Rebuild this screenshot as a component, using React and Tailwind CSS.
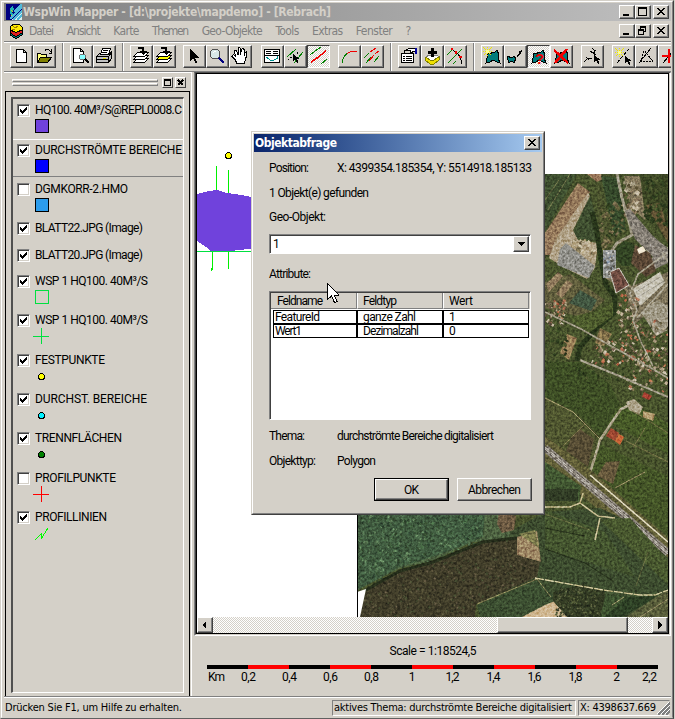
import React, { useLayoutEffect, useRef } from "react";

/* A line of text spread to a given pixel width, as bitmap fonts were. */
function T({ w, className = "", children }) {
  const ref = useRef(null);
  useLayoutEffect(() => {
    const el = ref.current;
    el.style.letterSpacing = "0px";
    const natural = el.getBoundingClientRect().width;
    const n = String(children).length;
    if (w && n > 1) {
      const gap = (w - natural) / (n - 1);
      el.style.letterSpacing = `${gap}px`;
      el.style.marginRight = `${-gap}px`;
    }
  }, [w, children]);
  return (
    <span ref={ref} className={`inline-block whitespace-pre ${className}`}>
      {children}
    </span>
  );
}

const SANS = "font-['Roboto','Liberation_Sans',sans-serif] text-[12px] leading-4";
const TAHOMA = "font-['DejaVu_Sans_Condensed','DejaVu_Sans',sans-serif] text-[11px] leading-4";
const RAISED = "bg-[#d4d0c8] border border-t-white border-l-white border-r-[#404040] border-b-[#404040]";
const DITHER = "bg-[repeating-conic-gradient(#ffffff_0_25%,#d4d0c8_0_50%)] bg-[length:2px_2px]";

const K = "#000";
const G = "#008000";
const R = "#f00000";
const TEAL = "#007c7c";

const Spark = ({ x = 3, y = 3 }) => (
  <g fill="#f0e800">
    {[[0, 0], [1, 1], [2, 2], [6, 2], [7, 1], [8, 0], [2, 6], [1, 7], [6, 6], [7, 7], [4, 0], [4, 2], [0, 4], [2, 4], [6, 4], [8, 4], [4, 6], [4, 8], [3, 3], [5, 3], [3, 5], [5, 5]].map(([a, b]) => (
      <rect key={`${a}-${b}`} x={x + a} y={y + b} width="1" height="1" />
    ))}
    <rect x={x + 3} y={y + 3} width="3" height="3" fill="#ffff90" />
  </g>
);
const Pointer = ({ x, y }) => (
  <path d={`M${x} ${y}v7l2-2 2 4h1.5l-1.5-4h2.5z`} fill={K} />
);
const Blob = () => (
  <path d="M6 8l3 1 3-2 2 0 2-2 2 5-1 3 2 5-3-1-4-2-3 2-4 1 1-5z" fill={TEAL} stroke={K} strokeWidth="1" />
);

const ICONS = {
  new: <path d="M6.500 4.500h7l3 3v10h-10zM13.500 4.500v3h3" fill="#fff" stroke={K} />,
  open: (
    <g>
      <path d="M4.500 17.500v-9h3l1 1h5v3" fill="#ffff80" stroke={K} />
      <path d="M4.500 17.500l3-5h11l-4 5z" fill="#808000" stroke={K} />
      <path d="M12 5.500q3-3 5.500 1.500M18.500 4v4h-3" fill="none" stroke={K} />
    </g>
  ),
  preview: (
    <g>
      <path d="M3.500 3.500h7l3 3v11h-10zM10.500 3.500v3h3" fill="#fff" stroke={K} />
      <circle cx="12.500" cy="12" r="3" fill="#8ff" stroke="#707070" />
      <path d="M15 14l4 4" stroke={K} strokeWidth="2" />
    </g>
  ),
  print: (
    <g>
      <path d="M3.500 11.500l3-3h10l2-2v7l-3 4h-12z" fill="#c0c0c0" stroke={K} />
      <path d="M7.500 9.500l2-6h8l-2 6z" fill="#fff" stroke={K} />
      <path d="M3.500 11.500h12l3-4M3.500 14.500h12M10 5.500h5M9 7.500h5M15.500 12v5" stroke={K} fill="none" />
      <path d="M10 13h3" stroke="#e0e000" />
    </g>
  ),
  layers: (c) => (
    <g>
      {[15, 12, 9].map((y, i) => (
        <path key={y} d={`M3.500 ${y + 2.500}l4-4h11l-4 4z`} fill={i === 1 ? c : "#fff"} stroke={K} />
      ))}
      <path d="M8 3h6M13 3v4" stroke={K} strokeWidth="2" />
      <path d="M9 6h8l-4 4z" fill={K} />
    </g>
  ),
  arrow: <path d="M7 4v12l3-3 2.500 5h2l-2.500-5.500h4z" fill={K} />,
  zoom: (
    <g>
      <circle cx="9" cy="9" r="5" fill="#d8e8e8" stroke="#505050" />
      <path d="M7 8q1-2 3-2" stroke="#fff" fill="none" />
      <path d="M13 13l5 5" stroke="#000080" strokeWidth="2.500" />
    </g>
  ),
  hand: (
    <path
      d="M8 18.500l-2-4-3-3q0-2 2-1.500l2 2-2-6q1-2 2.500 0l1.500 3.500v-6q1.500-2 2.500 0v6l1-5q1.500-1.500 2.500 0v6l1-3q2-1.500 2 1l-1.500 6-1 4z"
      fill="#fff"
      stroke={K}
    />
  ),
  panel: (
    <g>
      <path d="M3.500 4.500h15v13h-15z" fill="#fff" stroke={K} />
      <path d="M5 6.500h5M12 6.500h5M5 8.500h5M12 8.500h5M3 10.500h16" stroke={K} />
      <path d="M5 12l5 3.500h2l4-2 1-2" stroke="#009090" fill="none" />
    </g>
  ),
  pickline: (
    <g>
      <path d="M3 12l9-8M10 18l9-11" stroke={G} />
      <path d="M4 15l4-3M13 9l2-3" stroke={K} strokeDasharray="2 1" />
      <Pointer x={9} y={9} />
    </g>
  ),
  lines: (
    <g>
      <path d="M3 10l5-4M8 6l6-4M14 19l6-5" stroke={G} />
      <path d="M4 17l6-4M10 13l9-7" stroke={R} strokeWidth="1.500" />
    </g>
  ),
  curve: (
    <g fill="none">
      <path d="M4.500 18v-3q1-4 5-7" stroke={G} />
      <path d="M9 8.500l4-2M13 6.500h6" stroke={R} />
    </g>
  ),
  multi: (
    <g>
      <path d="M3 13l5-5M5 18l5-6M13 17l5-6" stroke={G} />
      <path d="M9 7l6-4M8 16l5-6M14 9l4-3" stroke={R} />
    </g>
  ),
  props: (
    <g>
      <path d="M3.500 8.500h12v9h-12z" fill="#fff" stroke={K} />
      <path d="M5 11.500h2M8 11.500h6M5 13.500h2M8 13.500h6M5 15.500h2M8 15.500h6" stroke={K} />
      <path d="M6 8V5h6v3l5-2V4l-5-1-4 2" fill="#fff" stroke={K} />
      <path d="M17 3h2v6h-2z" fill="#0000a0" />
    </g>
  ),
  addlayer: (
    <g>
      <path d="M4 13l4-3h8l3 3-6 5h-3z" fill="#fff" stroke="#808080" />
      <path d="M4 12l7 4 7-4v3l-5 4h-4l-5-4z" fill="#f0e000" stroke="#808000" />
      <path d="M11.500 3v9M7 7.500h9" stroke={K} strokeWidth="3" />
    </g>
  ),
  cross: (
    <g fill="none">
      <path d="M3 10l6-6M4 18L18 4M9 19l3-3" stroke={G} />
      <path d="M7 4l5 3q5 4 6 12" stroke={K} />
      <path d="M7 3h2v2H7zM11 6h2v3h-2zM15 11h3v2h-3z" fill={R} />
    </g>
  ),
  newshape: <g><Blob /><Spark x={2} y={2} /></g>,
  moveshape: (
    <g>
      <path d="M3.500 11.500l4 1 3-1 1 2-1 4-3-1-3 1z" fill={TEAL} stroke={K} />
      <path d="M12 11l3-3-1-1 4-2-1 5-1-1-3 3z" fill={K} />
    </g>
  ),
  query: (
    <g>
      <Blob />
      <text x="8" y="19" fill={R} className="font-['Liberation_Sans',sans-serif] text-[15px] font-bold">?</text>
    </g>
  ),
  delshape: <g><Blob /><path d="M4 5l14 13M17 4L5 18" stroke={R} strokeWidth="2.500" /></g>,
  pts: (
    <g>
      <path d="M3 17l4-4 4 1M5 12l3 3M12 9l3-4M9 6l6 4M11 3l3 3" stroke={K} fill="none" />
      <Pointer x={13} y={10} />
    </g>
  ),
  newline: <g><path d="M5 18L17 4" stroke={K} strokeDasharray="4 1" /><Spark x={3} y={3} /><Pointer x={13} y={11} /></g>,
  editline: (
    <g fill="none">
      <path d="M4 18L16 3" stroke={K} />
      <path d="M10 6l8 11M5 16l13 1M9 6l-3 10" stroke={K} strokeDasharray="2 1" />
    </g>
  ),
  crossline: <g><path d="M5 18L17 4" stroke={K} /><path d="M4 10.500h14M10.500 4v14" stroke={R} strokeWidth="2" /></g>,
};

function Tool({ icon, pressed }) {
  return (
    <div
      className={`h-[23px] w-[23px] shrink-0 border ${
        pressed
          ? `${DITHER} border-t-[#404040] border-l-[#404040] border-r-white border-b-white`
          : "border-t-white border-l-white border-r-[#404040] border-b-[#404040] bg-[#d4d0c8] shadow-[inset_-1px_-1px_0_#808080]"
      }`}
    >
      <svg viewBox="1 1 21 21" className="block h-[21px] w-[21px]" shapeRendering="crispEdges" fill="none">
        {icon}
      </svg>
    </div>
  );
}
const Sep = () => <div className="mx-1.5 -mt-0.5 h-7 w-0.5 shrink-0 border-l border-[#808080] border-r border-r-white" />;

function Sys({ kind }) {
  return (
    <div className={`flex h-[14px] w-4 shrink-0 ${RAISED} shadow-[inset_-1px_-1px_0_#808080]`}>
      <svg viewBox="0 0 14 12" className="block h-3 w-3.5" shapeRendering="crispEdges" fill="none" stroke="#000">
        {kind === "min" && <path d="M3 9h6" strokeWidth="2" />}
        {kind === "max" && <path d="M2.500 1.500h8v8h-8zM2 2h9" strokeWidth="1" />}
        {kind === "max" && <path d="M2 2h9" strokeWidth="2" />}
        {kind === "restore" && <path d="M4.500 4V1.500h5v5H8M4 2h6M2.500 4.500h5v5h-5zM2 5h6" />}
        {kind === "close" && <path d="M3 2l7 7M4 2l7 7M10 2L3 9M11 2L4 9" strokeWidth="1" />}
      </svg>
    </div>
  );
}

function Check({ on }) {
  return (
    <div className="h-[13px] w-[13px] shrink-0 border border-t-[#808080] border-l-[#808080] border-r-white border-b-white bg-white shadow-[inset_1px_1px_0_#404040,inset_-1px_-1px_0_#d4d0c8]">
      <svg viewBox="0 0 11 11" className="block h-[11px] w-[11px]" shapeRendering="crispEdges">
        {on && <path d="M2 4v3l2 2 5-5V1L4 6z" fill="#000" />}
      </svg>
    </div>
  );
}

const Box = ({ fill, stroke = "#000" }) => <rect x="0.500" y="1.500" width="13" height="13" fill={fill} stroke={stroke} />;
const Plus = ({ c }) => <path d="M-2 8.500h16M6.500 0v16" stroke={c} />;
const Dot = ({ c }) => <circle cx="6.500" cy="8.500" r="3" fill={c} stroke="#000" />;

const LAYERS = [
  ["HQ100. 40M³/S@REPL0008.C", 147, 1, "h-[40px] pt-[3px]", <Box fill="#7042dc" />],
  ["DURCHSTRÖMTE BEREICHE", 147, 1, "h-[38px] pt-[2px] border-t border-t-white border-b border-b-[#808080]", <Box fill="#0000ff" />],
  ["DGMKORR-2.HMO", 93, 0, "h-[39px] pt-1", <Box fill="#2c9cec" />],
  ["BLATT22.JPG (Image)", 108, 1, "h-[27px] pt-1", null],
  ["BLATT20.JPG (Image)", 108, 1, "h-[26px] pt-1", null],
  ["WSP 1 HQ100. 40M³/S", 113, 1, "h-[39px] pt-1", <Box fill="none" stroke="#00e040" />],
  ["WSP 1 HQ100. 40M³/S", 113, 1, "h-[40px] pt-1", <Plus c="#00e040" />],
  ["FESTPUNKTE", 70, 1, "h-[39px] pt-1", <Dot c="#ffff00" />],
  ["DURCHST. BEREICHE", 112, 1, "h-[39px] pt-1", <Dot c="#00f0ff" />],
  ["TRENNFLÄCHEN", 87, 1, "h-[40px] pt-1", <Dot c="#008000" />],
  ["PROFILPUNKTE", 81, 0, "h-[39px] pt-1", <Plus c="#ff0000" />],
  ["PROFILLINIEN", 72, 1, "h-[39px] pt-1", <path d="M0 15l6-6v5l7-11" stroke="#00ff00" fill="none" />],
];

function LayerPanel() {
  return (
    <div className="flex w-[188px] shrink-0 flex-col border-t border-r border-white">
      <div className="flex h-[18px] shrink-0 items-center pl-2">
        <div className="flex w-[146px] flex-col gap-px">
          <div className="h-[3px] border border-t-white border-l-white border-r-[#808080] border-b-[#808080]" />
          <div className="h-[3px] border border-t-white border-l-white border-r-[#808080] border-b-[#808080]" />
        </div>
        <div className={`ml-1 flex h-[11px] w-[11px] ${RAISED}`}>
          <div className="m-px h-[7px] w-[7px] border border-t-2 border-black" />
        </div>
        <div className={`ml-0.5 flex h-[11px] w-[11px] ${RAISED}`}>
          <svg viewBox="0 0 9 9" className="h-[9px] w-[9px]" shapeRendering="crispEdges">
            <path d="M2 2l5 5M7 2l-5 5" stroke="#000" strokeWidth="2" />
          </svg>
        </div>
      </div>
      <div className="ml-px min-h-0 w-[185px] grow border-x border-t border-black pl-[5px] pt-[5px]">
        <div className="h-[596px] w-[173px] border-t-2 border-l-2 border-r border-b border-t-[#505050] border-l-[#505050] border-r-white border-b-white">
          {LAYERS.map(([name, w, on, cls, sym], i) => (
            <div key={i} className={`w-[170px] pl-1 ${cls}`}>
              <div className="flex h-4 items-center gap-[5px]">
                <Check on={on} />
                <T w={w} className={SANS}>{name}</T>
              </div>
              {sym && (
                <svg viewBox="-2 0 18 16" className="ml-4 block h-4 w-[18px]" shapeRendering="crispEdges">{sym}</svg>
              )}
            </div>
          ))}
        </div>
      </div>
    </div>
  );
}

/* Deterministic scatter of roofs, trees and yards inside a box. */
function scatter(seed, n, x, y, w, h, colors, min, max) {
  let s = seed * 7919;
  const rnd = () => {
    s = (s * 16807) % 2147483647;
    return s / 2147483647;
  };
  rnd();
  return Array.from({ length: n }, (_, i) => {
    const px = x + rnd() * w;
    const py = y + rnd() * h;
    const a = min + rnd() * (max - min);
    const b = min + rnd() * (max - min);
    return (
      <rect key={`${seed}-${i}`} x={px} y={py} width={a} height={b} fill={colors[Math.floor(rnd() * colors.length)]} transform={`rotate(${30 + rnd() * 10} ${px} ${py})`} />
    );
  });
}
const HOUSES = ["#a86850", "#c0b098", "#988870", "#b86448", "#605040", "#c8bca8", "#3a3c24", "#8a7a60", "#4a4a30", "#6c6246"];
const TREES = ["#26341a", "#2c3a1e", "#384824", "#46502c"];

function Aerial() {
  return (
    <g clipPath="url(#photo)">
      <rect x="357" y="174" width="311" height="443" fill="#444f2b" />
      <path d="M545 174h32l-32 58z" fill="#3a4a2d" />
      <path d="M548 210l22-36M545 200l14-20" stroke="#77764e" strokeWidth="0.800" />
      <path d="M578 183l12 9-38 63h-7v-22z" fill="#8e7358" />
      <path d="M587 174h14l2 5-6 3z" fill="#96745a" />
      <path d="M590 194l6 24 2 23-27-3z" fill="#3b4a2e" />
      <path d="M588 193l2 3-17 34 5 10 20 3-3 25-8 11-24-12-14-9 6-18z" fill="#ab9c82" />
      <path d="M597 180l18 60-10 20-7-40z" fill="#464e2c" />
      <path d="M601 176l18 2 7 52-12 6z" fill="#33462a" />
      <path d="M624 176h15l14 26-8 18-14-12z" fill="#7b7158" />
      <path d="M640 174h28v70l-24-36z" fill="#3a4424" />
      <path d="M646 205l14-2 8 26v14z" fill="#5d4f33" />
      {scatter(71, 60, 598, 200, 25, 45, ["#6f6546", "#5b5a38", "#2c3a1c", "#73684c"], 1, 5)}
      {scatter(19, 50, 624, 178, 16, 36, ["#c0b49c", "#7b6a54", "#50482f", "#989078"], 1, 5)}
      {scatter(23, 50, 645, 175, 23, 50, TREES, 2, 5)}
      {scatter(83, 40, 568, 238, 28, 14, ["#c8bca0", "#9a8868", "#766c50", "#b0a080"], 1, 4)}
      <path d="M560 249l6-6 29 23-6 12-32-13z" fill="#8a8a86" />
      <path d="M617 174l5 24 8 27 2 10-15 8-8 12" stroke="#98927f" strokeWidth="3" fill="none" />
      <path d="M625 211l5-2 22 26 16 14v14l-15 7-5-8 5-5-18-18z" fill="#7c7770" />
      <path d="M632 222l24 30M655 240l13 8M652 246l16 8M650 252l16 6" stroke="#a09a90" strokeWidth="0.700" />
      <path d="M592 212l5 20 4 28 5 25 9 12-1 16-20 18-14 16-3 14" stroke="#26331a" strokeWidth="5" fill="none" />
      <rect x="603" y="250" width="13" height="28" fill="#8c8f90" />
      {scatter(311, 40, 603, 250, 11, 26, ["#d0d0cc", "#6f7f98", "#5a5850", "#a0a098"], 1, 3)}
      <path d="M617 247l7-6 8 2 5 7-1 10-6 6-8 0-6-7z" fill="#2f4022" />
      <path d="M635 245l15 8 6 18-10 6-15-14z" fill="#564434" />
      <path d="M637 249l6-3 3 5-7 3z" fill="#f0e6d0" />
      <path d="M605 278l20 12 10 34 16-14 17 4v-42l-36 14-16-8z" fill="#756c56" />
      <path d="M610 272l9-4 10 17-13 8z" fill="#68483f" stroke="#c8c4bc" />
      <path d="M633 289l27-17 5 11-25 23z" fill="#c4c0b2" />
      <path d="M636 292l26-16M638 297l26-16" stroke="#8d8980" strokeWidth="0.800" />
      <path d="M641 312l16-12 11 6v24l-12 6z" fill="#989280" />
      <path d="M545 282l26-8 20 16 14 10-20 18-40-10z" fill="#5a583a" />
      <path d="M546 284l12-12 5 4-14 16zM556 294l11-14 6 4-11 14z" fill="#8b765b" />
      <path d="M580 290l17 10-6 11-22-8z" fill="#3e523f" />
      <path d="M568 318l30-8 15-8v14l-26 18z" fill="#48562b" />
      <path d="M567 334l10 4-8 22-9-7z" fill="#947a55" />
      <path d="M600 328l12 6-8 12-9-3z" fill="#7d6c48" />
      {scatter(7, 70, 545, 298, 20, 26, HOUSES, 1, 3.500)}
      {scatter(9, 80, 618, 292, 20, 50, HOUSES, 1, 3.500)}
      {scatter(41, 80, 640, 318, 28, 54, HOUSES, 1, 3.500)}
      {scatter(47, 80, 588, 340, 54, 24, HOUSES, 1, 3.500)}
      {scatter(53, 50, 545, 326, 22, 48, TREES, 1.500, 4)}
      {scatter(59, 80, 624, 345, 44, 46, HOUSES, 1, 3.500)}
      <path d="M545 312l36 17 30 17 40 22 17 10M668 252l-30 22-8 20 7 16-4 10 8 22 12 24M668 262l-6-10M637 318l31-34" stroke="#a09a88" strokeWidth="1.600" fill="none" />
      {/* Fields south of the village */}
      <path d="M545 362l35 0 30 22 10 20-18 34-25-25-32-16z" fill="#3a4a24" />
      <path d="M545 398l28 16 24 24-6 32-46-24z" fill="#4b522e" />
      <path d="M572 436l8-7 14 10-6 28-22-16z" fill="#514832" />
      <path d="M635 404l33 20v30l-60-32 12-16z" fill="#425426" />
      <path d="M600 444l68 32v60l-76-66z" fill="#405026" />
      <path d="M606 462l14-1-7 23-16-8z" fill="#60533a" />
      {scatter(67, 50, 577, 364, 56, 18, TREES, 1, 3)}
      <path d="M580 360l37 15 51 22" stroke="#a09a88" strokeWidth="2" fill="none" />
      <path d="M634 403l-13 6-11 16-10 15-6 20-5 15" stroke="#a8a088" strokeWidth="2.500" fill="none" />
      <path d="M626 402l8-3 9 8-4 8-10-5z" fill="#a89e86" />
      <path d="M643 411l12 3-2 7-10-4z" fill="#b0976e" />
      <path d="M611 428l8 5-4 8-9-5z" fill="#984430" />
      <path d="M619 434l5 3-4 8-5-4z" fill="#c86438" />
      <path d="M644 392l8 4-3 4-7-3z" fill="#a03c30" />
      <path d="M545 398l28 14 28 28M615 488l30-16" stroke="#a0946c" strokeWidth="1" fill="none" />
      <path d="M624 440l44 22M645 428l-12 20M633 411l35 22M563 446l22-22" stroke="#7c744c" strokeWidth="0.800" fill="none" />
      {/* Railway embankment */}
      <path d="M545 436l48 36 75 66v28l-123-100z" fill="#5b5935" />
      <path d="M545 462l36 24-2 16-34-10z" fill="#3e5330" />
      <path d="M590 475l78 67" stroke="#e4ddc4" strokeWidth="1.500" />
      <path d="M545 448l123 105" stroke="#8a847d" strokeWidth="7.500" />
      <path d="M545 445.500l123 105M545 450.500l123 105" stroke="#4c4741" strokeWidth="0.900" strokeDasharray="4 2" />
      <path d="M545 447l123 105M545 449l123 105" stroke="#d0cbc4" strokeWidth="0.800" strokeDasharray="5 3" />
      <path d="M545 489h33v12h-33z" fill="#2e3924" />
      <path d="M545 512l55-4 25 12 43 38v60H480v-70z" fill="#39482d" />
      <path d="M545 510l60 22 30 45-90-28z" fill="#40502d" />
      <path d="M600 520l30-2 38 42v25z" fill="#44532d" />
      <path d="M525 507h45l10-4 3-10M580 503l18 13 17 2M600 518l-5 22" stroke="#c8bd92" strokeWidth="1.500" fill="none" />
      <path d="M545 528l40 8M545 549l40 14 28 18" stroke="#242e1a" strokeWidth="1.200" fill="none" />
      <path d="M545 514l45 16M648 552l-12 34" stroke="#6c6e45" strokeWidth="0.800" />
      {/* Woods in the south */}
      <path d="M357 500h130l-4 37-50 23-33 8-43 22z" fill="#3c563d" />
      {scatter(101, 600, 358, 510, 124, 70, ["#4e6c4e", "#33492f", "#5c7c58", "#2c4230", "#40603f"], 1, 3)}
      <path d="M357 590l43-22 33-8 50-23 2-25h30l-6 25-40 6-36 14-34 10-42 24z" fill="#485c3e" />
      <path d="M499 512l17 4-2 14-12 3-5-9z" fill="#665540" />
      <path d="M366 590l34-18 33-10 50-20 34-5 0 18 23 7-3 15-27 12-34 15-1 14H359z" fill="#3d3a28" />
      <clipPath id="wood"><path d="M366 590l34-18 33-10 50-20 34-5 0 18 23 7-3 15-27 12-34 15-1 14H359z" /></clipPath>
      <g clipPath="url(#wood)">{scatter(211, 900, 360, 535, 182, 82, ["#504d36", "#2e2c20", "#564d3b", "#2a291e", "#424a30"], 1, 2.500)}</g>
      <path d="M366 590l34-19 33-9 50-20 34-4" stroke="#232b1a" strokeWidth="3" fill="none" />
      <path d="M517 537l20-6 4 31-24-7z" fill="#967f60" />
      <path d="M519 534l16-4 4 18z" fill="#77774b" />
      <path d="M477 605l60-25 18 16 20-2 20 23H480z" fill="#384a2f" />
      <path d="M477 604l60-25 14 18" stroke="#888258" fill="none" />
      <path d="M522 617l23-12 10-4 14 16z" fill="#ccb28c" />
      <path d="M553 592l30-8 22 8-2 25h-36l-14-16z" fill="#303822" />
      {scatter(401, 200, 556, 588, 44, 29, ["#4a5232", "#242b1e", "#585e3e", "#3a452c"], 1, 2.500)}
      <path d="M606 594l22 3-22 20h-6z" fill="#3a4e2e" />
      <path d="M628 597l30-1-36 21h-18z" fill="#2b3d24" />
      <path d="M668 590v27h-42l30-20z" fill="#535838" />
      <path d="M624 597l-12 8M640 617l28-18" stroke="#989068" />
      <path d="M535 578l68 12 37 5 15 0 13-5" stroke="#d5cb9e" strokeWidth="1.300" fill="none" strokeDasharray="9 1" />
      <rect x="357" y="174" width="311" height="443" filter="url(#grain)" className="mix-blend-overlay" opacity="0.350" />
    </g>
  );
}

function MapCanvas() {
  return (
    <svg viewBox="197 74 471 543" className="isolate block h-[543px] w-[471px] bg-white">
      <defs>
        <clipPath id="photo"><path d="M357 174h311v443H360l6-28-9 3z" /></clipPath>
        <filter id="grain" x="0" y="0" width="100%" height="100%" colorInterpolationFilters="sRGB">
          <feTurbulence type="fractalNoise" baseFrequency="0.4" numOctaves="3" seed="4" />
          <feColorMatrix values="1.800 0 0 0 -0.320  1.800 0 0 0 -0.330  1.800 0 0 0 -0.360  0 0 0 0 1" />
        </filter>
      </defs>
      <Aerial />
      <g shapeRendering="crispEdges" fill="none">
        <path d="M357.500 500v117" stroke="#000" />
        <path d="M216.500 166v18l-1 12M228.500 170v28M212.500 252v18M228.500 252v17M211.500 268v3" stroke="#00f000" />
        <path d="M197 194l12-3 8-1 10 3 15 2 9 2v52l-14 1-8 2h-17l-6-5-9-6z" fill="#7042dc" />
        <rect x="197" y="251" width="56" height="1" fill="#00e040" />
        <circle cx="228.500" cy="155.500" r="3" fill="#ffff00" stroke="#000" />
      </g>
    </svg>
  );
}

function ScrollBtn({ left }) {
  return (
    <div className={`flex h-4 w-4 shrink-0 items-center justify-center ${RAISED} shadow-[inset_-1px_-1px_0_#808080]`}>
      <svg viewBox="0 0 8 8" className="h-2 w-2" shapeRendering="crispEdges">
        <path d={left ? "M5 0v8L1 4z" : "M2 0v8l4-4z"} fill="#000" />
      </svg>
    </div>
  );
}

const TICKS = [
  ["Km", 17, "w-[21px] text-left pl-px"], ["0,2", 15, "w-[41px]"], ["0,4", 15, "w-[41px]"], ["0,6", 15, "w-[41px]"],
  ["0,8", 15, "w-[41px]"], ["1", 0, "w-[40px]"], ["1,2", 14, "w-[41px]"], ["1,4", 14, "w-[41px]"], ["1,6", 14, "w-[41px]"],
  ["1,8", 14, "w-[41px]"], ["2", 0, "w-[41px]"], ["2,2", 15, "w-[20px] text-right"],
];

function MapView() {
  return (
    <div className="flex min-w-0 grow flex-col pl-0.5">
      <div className="h-[564px] w-[477px] border border-t-[#505050] border-l-[#808080] border-r-white border-b-white">
        <div className="border-x border-b border-l-[#404040] border-r-[#d4d0c8] border-b-[#d4d0c8]">
          <div className="border border-black">
            <MapCanvas />
            <div className={`flex h-4 ${DITHER}`}>
              <ScrollBtn left />
              <div className={`ml-[284px] h-4 w-[131px] ${RAISED} shadow-[inset_-1px_-1px_0_#808080]`} />
              <div className="grow" />
              <ScrollBtn />
            </div>
          </div>
        </div>
      </div>
      <div className={`flex flex-col pt-[7px] pl-[13px] ${SANS}`}>
        <div className="w-[452px] text-center"><T w={87}>Scale = 1:18524,5</T></div>
        <div className="mt-[6px] flex h-1 w-[451px]">
          {Array.from({ length: 11 }, (_, i) => (
            <div key={i} className={`grow ${i % 2 ? "bg-[#ff0000]" : "bg-black"}`} />
          ))}
        </div>
        <div className="flex w-[451px] text-center">
          {TICKS.map(([t, w, cls]) => (
            <div key={t} className={`shrink-0 ${cls}`}><T w={w}>{t}</T></div>
          ))}
        </div>
      </div>
    </div>
  );
}

const ROWS = [
  ["FeatureId", 45, "ganze Zahl", 53, "1"],
  ["Wert1", 27, "Dezimalzahl", 56, "0"],
];

function Dialog() {
  return (
    <div className="absolute left-[251px] top-[131px] h-[384px] w-[294px] border border-[#d4d0c8] border-r-[#404040] border-b-[#404040]">
      <div className={`flex h-full flex-col border border-t-white border-l-white border-r-[#808080] border-b-[#808080] bg-[#d4d0c8] p-px text-black ${SANS}`}>
        <div className="flex h-[18px] shrink-0 items-center justify-between bg-gradient-to-r from-[#0a246a] to-[#a6caf0] pl-px pr-0.5">
          <T w={82} className="font-['DejaVu_Sans_Condensed',sans-serif] text-[12px] font-bold text-white">Objektabfrage</T>
          <Sys kind="close" />
        </div>
        <div className="flex grow flex-col pl-[15px] pr-2.5">
          <div className="mt-2 flex justify-between"><T w={40}>Position:</T><T w={195}>X: 4399354.185354, Y: 5514918.185133</T></div>
          <div className="mt-[9px] h-4"><T w={100}>1 Objekt(e) gefunden</T></div>
          <div className="mt-2 h-4"><T w={57}>Geo-Objekt:</T></div>
          <div className="mt-[9px] flex h-5 w-[262px] items-center justify-between border border-t-[#808080] border-l-[#808080] border-r-white border-b-white bg-white pl-[3px] pr-px shadow-[inset_1px_1px_0_#404040]">
            <T>1</T>
            <div className={`flex h-4 w-4 items-center justify-center ${RAISED} shadow-[inset_-1px_-1px_0_#808080]`}>
              <svg viewBox="0 0 7 4" className="h-1 w-[7px]" shapeRendering="crispEdges"><path d="M0 0h7L3.500 4z" /></svg>
            </div>
          </div>
          <div className="mt-[12px] h-4"><T w={42}>Attribute:</T></div>
          <div className="mt-[9px] h-[129px] w-[262px] shrink-0 border border-t-[#808080] border-l-[#808080] border-r-white border-b-white bg-white pl-px pt-px shadow-[inset_1px_1px_0_#404040]">
            <div className="flex h-4 bg-[#d4d0c8]">
              <div className="w-[86px] border-r border-b border-[#808080] pl-1.5"><T w={46}>Feldname</T></div>
              <div className="w-[86px] border-r border-b border-l border-[#808080] border-l-white pl-[5px]"><T w={34}>Feldtyp</T></div>
              <div className="w-[86px] border-r border-b border-l border-[#808080] border-l-white pl-[5px]"><T w={24}>Wert</T></div>
            </div>
            <div className="ml-0.5 mt-px flex flex-col">
              {ROWS.map(([a, aw, b, bw, c]) => (
                <div key={a} className="flex h-[14px] leading-3">
                  <div className="w-[84px] border border-black pl-px"><T w={aw} className="leading-3">{a}</T></div>
                  <div className="w-[86px] border border-black pl-[5px]"><T w={bw} className="leading-3">{b}</T></div>
                  <div className="w-[86px] border border-black pl-[5px]"><T className="leading-3">{c}</T></div>
                </div>
              ))}
            </div>
          </div>
          <div className="mt-[8px] flex h-4"><div className="w-[68px]"><T w={36}>Thema:</T></div><T w={157}>durchströmte Bereiche digitalisiert</T></div>
          <div className="mt-[9px] flex h-4"><div className="w-[68px]"><T w={47}>Objekttyp:</T></div><T w={39}>Polygon</T></div>
          <div className="mt-[9px] flex justify-end gap-2">
            <div className="h-[23px] w-[75px] border border-black">
              <div className={`flex h-[21px] items-center justify-center ${RAISED} shadow-[inset_-1px_-1px_0_#808080]`}><T w={15}>OK</T></div>
            </div>
            <div className={`flex h-[23px] w-[75px] items-center justify-center ${RAISED} shadow-[inset_-1px_-1px_0_#808080]`}><T w={53}>Abbrechen</T></div>
          </div>
        </div>
      </div>
    </div>
  );
}

const MENU = [["Datei", 25], ["Ansicht", 34], ["Karte", 26], ["Themen", 37], ["Geo-Objekte", 61], ["Tools", 24], ["Extras", 31], ["Fenster", 37], ["?", 5]];

export default function App() {
  return (
    <div className="relative h-[719px] w-[675px] overflow-hidden bg-[#d4d0c8] pr-px">
      <div className="h-full border border-[#d4d0c8] border-r-[#404040] border-b-[#606060]">
        <div className="flex h-full flex-col border border-t-white border-l-white border-r-[#808080] border-b-[#d4d0c8] pl-0.5 pr-px pt-px">
          <div className="flex h-[18px] shrink-0 items-center bg-gradient-to-r from-[#808080] to-[#c0c0c0] pl-0.5 pr-0.5">
            <svg viewBox="0 0 16 16" className="mr-px h-4 w-4 shrink-0" shapeRendering="crispEdges">
              <path d="M0 0h16v16H0z" fill="#000080" />
              <path d="M5 16L16 5v11z" fill="#d8f0f0" />
              <path d="M4 4l3-2 1 3-2 3 2 4-1 2-3-5z" fill="#20b0b0" />
              <path d="M5 6l2 2M5 11l2 1" stroke="#d0d020" />
              <path d="M4 15L16 3M7 16l9-9M11 16l5-5M8 8l8-8" stroke="#50b8d8" strokeWidth="1.500" />
            </svg>
            <T w={308} className="font-['DejaVu_Sans_Condensed',sans-serif] text-[12px] leading-4 font-bold text-[#d4d0c8]">
              {"WspWin Mapper - [d:\\projekte\\mapdemo] - [Rebrach]"}
            </T>
            <div className="ml-auto flex"><Sys kind="min" /><Sys kind="max" /><div className="w-0.5" /><Sys kind="close" /></div>
          </div>
          <div className="flex h-5 shrink-0 items-center pl-[5px] pr-0.5">
            <svg viewBox="0 0 14 16" className="mr-1.5 h-4 w-3.5 shrink-0" shapeRendering="crispEdges">
              <path d="M1 9l6-3 6 3v3l-5 3H6l-5-3z" fill="#008080" stroke="#000" />
              <path d="M1 7l6-3 6 3v3l-5 3H6l-5-3z" fill="#e02020" stroke="#000" />
              <path d="M1 4l4-3h5l3 3v3L8 9H6L1 7z" fill="#ffe800" stroke="#000" />
              <path d="M4 3l2 2 3-2M3 6l3 1" stroke="#a08000" fill="none" />
            </svg>
            <div className={`flex gap-[12.700px] text-[#808080] ${TAHOMA}`}>
              {MENU.map(([m, w]) => <T key={m} w={w} className="text-[12px]">{m}</T>)}
            </div>
            <div className="ml-auto flex"><Sys kind="min" /><Sys kind="restore" /><div className="w-0.5" /><Sys kind="close" /></div>
          </div>
          <div className="h-0.5 shrink-0 border-t border-b border-t-[#808080] border-b-white" />
          <div className="flex h-[29px] shrink-0 overflow-hidden border-b border-[#808080] pl-1.5 pt-0.5">
            <Tool icon={ICONS.new} /><Tool icon={ICONS.open} />
            <Sep />
            <Tool icon={ICONS.preview} /><Tool icon={ICONS.print} />
            <Sep />
            <Tool icon={ICONS.layers("#fff")} /><Tool icon={ICONS.layers("#ffff00")} />
            <div className="w-[7px] shrink-0" />
            <Tool icon={ICONS.arrow} /><Tool icon={ICONS.zoom} /><Tool icon={ICONS.hand} />
            <div className="w-[9px] shrink-0" />
            <Tool icon={ICONS.panel} /><Tool icon={ICONS.pickline} /><Tool icon={ICONS.lines} pressed />
            <div className="w-2 shrink-0" />
            <Tool icon={ICONS.curve} /><Tool icon={ICONS.multi} />
            <Sep />
            <Tool icon={ICONS.props} /><Tool icon={ICONS.addlayer} /><Tool icon={ICONS.cross} />
            <Sep />
            <Tool icon={ICONS.newshape} /><Tool icon={ICONS.moveshape} /><Tool icon={ICONS.query} pressed /><Tool icon={ICONS.delshape} />
            <div className="w-2 shrink-0" />
            <Tool icon={ICONS.pts} />
            <div className="w-2 shrink-0" />
            <Tool icon={ICONS.newline} /><Tool icon={ICONS.editline} /><Tool icon={ICONS.crossline} />
          </div>
          <div className="flex h-[624px] shrink-0">
            <LayerPanel />
            <MapView />
          </div>
          <div className={`flex grow items-start border-t border-[#808080] text-black shadow-[inset_0_1px_0_#fff] ${TAHOMA}`}>
            <div className="w-[328px] shrink-0 pl-px pt-[3px]"><T w={177}>Drücken Sie F1, um Hilfe zu erhalten.</T></div>
            <div className="mt-[3px] flex h-4 w-[244px] shrink-0 items-center border border-t-[#808080] border-l-[#808080] border-r-white border-b-white pl-px">
              <T w={238}>aktives Thema: durchströmte Bereiche digitalisiert</T>
            </div>
            <div className="ml-0.5 mt-[3px] flex h-4 w-[92px] items-center border border-t-[#808080] border-l-[#808080] border-r-[#d4d0c8] border-b-white pl-px">
              <div className="w-[77px] shrink-0"><T w={76}>X: 4398637.669</T></div>
              <svg viewBox="0 0 13 13" className="h-[13px] w-[13px] shrink-0" shapeRendering="crispEdges">
                <path d="M1 13L13 1M5 13l8-8M9 13l4-4" stroke="#808080" strokeWidth="1.800" />
                <path d="M0 12L12 0M4 12l9-9M8 12l5-5" stroke="#fff" />
              </svg>
            </div>
          </div>
        </div>
      </div>
      <Dialog />
      <svg viewBox="0 0 12 20" className="absolute left-[327px] top-[283px] h-5 w-3" shapeRendering="crispEdges">
        <path d="M0.500 0.500v16l4-3.500 3 6.500 2.500-1-3-6.500h5z" fill="#fff" stroke="#000" />
      </svg>
    </div>
  );
}
